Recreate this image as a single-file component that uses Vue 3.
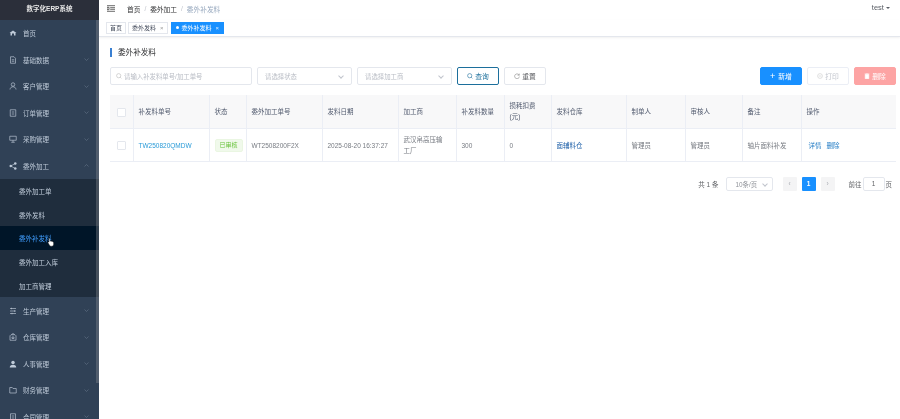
<template>
  <div class="layout">
    <aside class="sidebar">
      <div class="logo">数字化ERP系统</div>
      <div class="menu">
        <template v-for="item in menus" :key="item.name">
          <div class="menu-item">
            <svg class="menu-icon" viewBox="0 0 16 16" v-html="item.icon"></svg>
            <span class="menu-name">{{ item.name }}</span>
            <svg v-if="item.arrow" class="arrow" viewBox="0 0 10 6">
              <path :d="item.open ? 'M1 5l4-4 4 4' : 'M1 1l4 4 4-4'" fill="none" stroke="currentColor" stroke-width="1" />
            </svg>
          </div>
          <div v-if="item.open" class="submenu">
            <div v-for="sub in subs" :key="sub" class="sub-item" :class="{ active: sub === '委外补发料' }">
              {{ sub }}
              <svg v-if="sub === '委外补发料'" class="hand" viewBox="0 0 12 14">
                <path d="M3.5 1.2c.6 0 1 .4 1 1v3.6l.6-.2c.5-.1 1 .1 1.2.4.5-.2 1 0 1.300.4.5-.2 1.100 0 1.400.5.400 0 .9.300.9 1v2.600c0 1.500-1 2.800-2.500 2.800H6c-1 0-1.700-.5-2.200-1.300L1.500 8.200c-.3-.5-.1-1 .3-1.200.4-.2.9-.1 1.200.3V2.200c0-.6-.1-1 .5-1z" fill="#fff" stroke="#222" stroke-width=".7" />
              </svg>
            </div>
          </div>
        </template>
      </div>
      <div class="side-scroll"></div>
    </aside>

    <main class="main">
      <header class="navbar">
        <svg class="fold" viewBox="0 0 10 8">
          <path d="M0 .5h10M0 7.500h10M4 3h6M4 5h6M0 2.500h2.500v3H0z" fill="none" stroke="#444" stroke-width="1" />
        </svg>
        <span class="crumb">首页</span>
        <span class="sep">/</span>
        <span class="crumb">委外加工</span>
        <span class="sep">/</span>
        <span class="crumb last">委外补发料</span>
        <span class="user">test <i class="caret"></i></span>
      </header>

      <div class="tags">
        <span class="tag">首页</span>
        <span class="tag">委外发料<em>×</em></span>
        <span class="tag on"><b></b>委外补发料<em>×</em></span>
      </div>

      <section class="content">
        <h2 class="title">委外补发料</h2>

        <div class="filters">
          <div class="field search">
            <svg class="small-icon" viewBox="0 0 10 10">
              <circle cx="4.500" cy="4.500" r="3.500" fill="none" stroke="#bbb" />
              <path d="M7 7l2 2" stroke="#bbb" />
            </svg>
            请输入补发料单号/加工单号
          </div>
          <div class="field select">请选择状态<i class="chev"></i></div>
          <div class="field select">请选择加工商<i class="chev"></i></div>
          <button class="btn query">
            <svg class="small-icon" viewBox="0 0 10 10">
              <circle cx="4.500" cy="4.500" r="3.500" fill="none" stroke="#1c6f9c" />
              <path d="M7 7l2 2" stroke="#1c6f9c" />
            </svg>
            查询
          </button>
          <button class="btn">
            <svg class="small-icon" viewBox="0 0 10 10">
              <path d="M8.500 3.500A4 4 0 1 0 9 6M8.800 1v2.700H6" fill="none" stroke="#888" />
            </svg>
            重置
          </button>
          <div class="spacer"></div>
          <button class="btn primary">
            <span class="plus">+</span>
            新增
          </button>
          <button class="btn disabled">
            <svg class="small-icon" viewBox="0 0 10 10">
              <circle cx="5" cy="5" r="4" fill="none" stroke="#ccc" />
              <path d="M3 5h4" stroke="#ccc" />
            </svg>
            打印
          </button>
          <button class="btn danger">
            <svg class="small-icon" viewBox="0 0 10 10">
              <path d="M2 2.500h6V9.500H2zM1 1.500h8M4 .5h2" fill="#fff" stroke="#fff" />
            </svg>
            删除
          </button>
        </div>

        <table class="grid">
          <colgroup>
            <col v-for="(w, i) in widths" :key="i" :style="{ width: w + 'px' }" />
          </colgroup>
          <thead>
            <tr>
              <th class="check-cell"><i class="check"></i></th>
              <th v-for="h in heads" :key="h">{{ h }}</th>
            </tr>
          </thead>
          <tbody>
            <tr>
              <td class="check-cell"><i class="check"></i></td>
              <td class="link">TW250820QMDW</td>
              <td><span class="status">已审核</span></td>
              <td>WT2508200F2X</td>
              <td>2025-08-20 16:37:27</td>
              <td>武汉帛高压输<br />工厂</td>
              <td>300</td>
              <td>0</td>
              <td class="store">面辅料仓</td>
              <td>管理员</td>
              <td>管理员</td>
              <td>轴片面料补发</td>
              <td class="actions"><span>详情</span><span>删除</span></td>
            </tr>
          </tbody>
        </table>

        <div class="pager">
          <span>共 1 条</span>
          <div class="page-size">10条/页<i class="chev"></i></div>
          <span class="page-btn">‹</span>
          <span class="page-btn current">1</span>
          <span class="page-btn">›</span>
          <span class="goto">前往</span>
          <span class="page-input">1</span>
          <span>页</span>
        </div>
      </section>
    </main>
  </div>
</template>

<script setup>
const s = 'fill="none" stroke="#bfcbd9" stroke-width="1.300"'
const f = 'fill="#bfcbd9"'

const menus = [
  { name: '首页', arrow: false, icon: `<path ${f} d="M8 3L1 8h2v5h3V9h4v4h3V8h2z"/>` },
  { name: '基础数据', arrow: true, icon: `<path ${s} d="M3 1.500h7l3 3v10H3zM5.500 7.500h5M5.500 10.500h5"/>` },
  { name: '客户管理', arrow: true, icon: `<circle ${s} cx="8" cy="5" r="3.500"/><path ${s} d="M2 15c.5-4 3-5.500 6-5.500s5.500 1.500 6 5.500"/>` },
  { name: '订单管理', arrow: true, icon: `<path ${s} d="M2.500 1.500h11v13h-11zM5.500 6h5M5.500 10h5"/>` },
  { name: '采购管理', arrow: true, icon: `<path ${s} d="M1.500 2.500h13v8h-13zM4.500 14.500h7M8 10.500v4"/>` },
  { name: '委外加工', arrow: true, open: true, icon: `<circle ${f} cx="3.500" cy="8" r="2.500"/><circle ${f} cx="12.500" cy="3" r="2.500"/><circle ${f} cx="12.500" cy="13" r="2.500"/><path ${s} d="M12 3L4 8l8 5"/>` },
  { name: '生产管理', arrow: true, icon: `<path ${s} d="M2 3h12M2 8h12M2 13h12M5 1.500v3M11 6.500v3M6 11.500v3"/>` },
  { name: '仓库管理', arrow: true, icon: `<path ${s} d="M2 5.500l2-2h8l2 2v9H2zM5.500 3.500c0-3 5-3 5 0M6 8h4v3H6z"/>` },
  { name: '人事管理', arrow: true, icon: `<circle ${f} cx="8" cy="5" r="3.500"/><path ${f} d="M1.500 15c0-4 2.500-5.500 6.500-5.500s6.500 1.500 6.500 5.500z"/>` },
  { name: '财务管理', arrow: true, icon: `<path ${s} d="M1.500 3h5l1.500 2h6.500v9h-13z"/>` },
  { name: '合同管理', arrow: true, icon: `<path ${s} d="M3 1.500h10v13H3zM5.500 6h5M5.500 10h5"/>` }
]

const subs = ['委外加工单', '委外发料', '委外补发料', '委外加工入库', '加工商管理']

const widths = [23, 76, 37, 76, 76, 58, 48, 47, 75, 59, 57, 59, 95]
const heads = ['补发料单号', '状态', '委外加工单号', '发料日期', '加工商', '补发料数量', '损耗扣费(元)', '发料仓库', '制单人', '审核人', '备注', '操作']
</script>

<style>
html, body {
  margin: 0;
  background: #fff;
  overflow: hidden;
}
</style>

<style scoped>
.layout {
  display: flex;
  width: 900px;
  height: 419px;
  overflow: hidden;
  font-family: "Liberation Sans", "Noto Sans CJK SC", sans-serif;
  font-size: 6.500px;
  color: #606266;
  filter: blur(0.35px);
}

.sidebar {
  position: relative;
  flex: 0 0 99px;
  background: #304156;
  overflow: hidden;
}

.logo {
  height: 20px;
  line-height: 18px;
  background: #2b2f3a;
  color: #e6e6e6;
  font-weight: bold;
  text-align: center;
  font-size: 6.500px;
}

.menu-item {
  display: flex;
  align-items: center;
  height: 26.500px;
  color: #bfcbd9;
  padding-left: 9px;
  padding-right: 9px;
  box-sizing: border-box;
}

.menu-icon {
  width: 8px;
  height: 8px;
  margin-right: 6px;
  flex: none;
}

.menu-name {
  flex: 1;
}

.arrow {
  width: 5px;
  height: 3px;
  color: #6f7f92;
  margin-right: 1px;
}

.submenu {
  background: #1f2d3d;
}

.sub-item {
  position: relative;
  height: 23.700px;
  line-height: 25px;
  padding-left: 19px;
  color: #bfcbd9;
}

.sub-item.active {
  background: #001528;
  color: #409eff;
}

.hand {
  position: absolute;
  left: 47px;
  top: 11px;
  width: 8px;
  height: 10px;
}

.side-scroll {
  position: absolute;
  top: 20px;
  right: 0;
  width: 3px;
  height: 363px;
  background: rgba(144, 147, 153, 0.35);
}

.main {
  flex: 1;
  min-width: 0;
  display: flex;
  flex-direction: column;
}

.navbar {
  display: flex;
  align-items: center;
  height: 20px;
  flex: none;
  padding: 0 10px 3px 8px;
  box-sizing: border-box;
  font-size: 6.700px;
}

.fold {
  width: 8px;
  height: 7px;
  margin-right: 12px;
}

.crumb {
  color: #303133;
}

.crumb.last {
  color: #97a8be;
}

.sep {
  margin: 0 4px;
  color: #c0c4cc;
}

.user {
  margin-left: auto;
  margin-bottom: 2px;
  font-size: 7.500px;
  color: #5a5e66;
}

.caret {
  display: inline-block;
  border: 2px solid transparent;
  border-top-color: #5a5e66;
  border-bottom: 0;
  vertical-align: middle;
}

.tags {
  display: flex;
  align-items: center;
  gap: 2px;
  height: 17px;
  flex: none;
  padding: 0 0 1px 7px;
  box-sizing: border-box;
  border-bottom: 1px solid #e4e7ed;
  box-shadow: 0 1px 2px rgba(0, 0, 0, 0.06);
}

.tag {
  display: flex;
  align-items: center;
  height: 12px;
  padding: 0 3px;
  border: 1px solid #e4e7ed;
  box-sizing: border-box;
  font-size: 6px;
  color: #495060;
  background: #fff;
}

.tag em {
  font-style: normal;
  margin-left: 4px;
  color: #999;
}

.tag.on {
  margin-left: 1px;
  padding: 0 4px;
  background: #1890ff;
  border-color: #1890ff;
  color: #fff;
}

.tag.on em {
  color: #dcecff;
}

.tag.on b {
  width: 3px;
  height: 3px;
  border-radius: 50%;
  background: #fff;
  margin-right: 3px;
}

.content {
  padding: 11px 4px 0 11px;
}

.title {
  margin: 0 0 10px;
  padding-left: 6px;
  height: 9px;
  line-height: 9px;
  border-left: 2px solid #3a80d2;
  font-size: 7.600px;
  font-weight: normal;
  color: #303133;
}

.filters {
  display: flex;
  align-items: center;
  gap: 5px;
  height: 18px;
  margin-bottom: 9.500px;
}

.field {
  display: flex;
  align-items: center;
  height: 18px;
  padding: 0 5px;
  box-sizing: border-box;
  border: 1px solid #e4e7ed;
  border-radius: 2px;
  color: #b8bcc4;
  font-size: 6.400px;
}

.search {
  width: 142px;
}

.select {
  width: 95px;
  padding-left: 7px;
  justify-content: space-between;
}

.chev {
  width: 3px;
  height: 3px;
  border-right: 1px solid #c0c4cc;
  border-bottom: 1px solid #c0c4cc;
  transform: rotate(45deg);
  margin: 0 3px 1px;
}

.small-icon {
  width: 6px;
  height: 6px;
  margin-right: 2px;
  flex: none;
}

.btn {
  display: flex;
  align-items: center;
  justify-content: center;
  width: 42px;
  height: 18px;
  padding: 0;
  background: #fff;
  border: 1px solid #e4e7ed;
  border-radius: 2px;
  font: inherit;
  font-size: 6.800px;
  color: #606266;
}

.query {
  border-color: #1c6f9c;
  color: #1c6f9c;
}

.spacer {
  flex: 1;
}

.primary {
  background: #1890ff;
  border-color: #1890ff;
  color: #fff;
}

.plus {
  margin-right: 3px;
  font-size: 9px;
  line-height: 9px;
}

.disabled {
  border-color: #ebeef5;
  color: #c0c4cc;
}

.danger {
  background: #fda4a4;
  border-color: #fda4a4;
  color: #fff;
}

.grid {
  width: 786px;
  table-layout: fixed;
  border-collapse: collapse;
}

.grid th,
.grid td {
  padding: 0 5px;
  border-right: 1px solid #ebeef5;
  border-bottom: 1px solid #ebeef5;
  text-align: left;
  font-weight: normal;
  line-height: 11px;
  box-sizing: border-box;
}

.grid th:last-child,
.grid td:last-child {
  border-right: 0;
}

.grid th {
  height: 34px;
  background: #f8f8f9;
  color: #515a6e;
}

.grid td {
  height: 33px;
  color: #777b82;
}

.grid .check-cell {
  padding: 0;
  text-align: center;
}

.check {
  display: inline-block;
  width: 7px;
  height: 7px;
  border: 1px solid #e4e7ed;
  border-radius: 1px;
  background: #fff;
  vertical-align: middle;
}

.grid .link {
  color: #2a9bd8;
}

.status {
  display: inline-block;
  height: 13px;
  line-height: 11px;
  padding: 0 4px;
  box-sizing: border-box;
  border: 1px solid #eaf6e2;
  border-radius: 2px;
  background: #f0f9eb;
  color: #67c23a;
  font-size: 6px;
  white-space: nowrap;
}

.grid .store {
  color: #1d5fa8;
}

.grid .actions {
  color: #1f7ac4;
}

.actions span {
  margin-left: 2px;
  margin-right: 3px;
}

.pager {
  display: flex;
  align-items: center;
  height: 14px;
  margin-top: 15px;
  padding-right: 4px;
  justify-content: flex-end;
  color: #606266;
}

.page-size {
  display: flex;
  align-items: center;
  justify-content: space-between;
  width: 47px;
  height: 14px;
  margin: 0 10px 0 7px;
  padding: 0 2px 0 9px;
  box-sizing: border-box;
  border: 1px solid #e4e7ed;
  border-radius: 2px;
  color: #909399;
  font-size: 6.400px;
}

.page-btn {
  width: 14px;
  height: 14px;
  line-height: 14px;
  margin-right: 5px;
  text-align: center;
  border-radius: 1px;
  background: #f4f4f5;
  color: #a8abb2;
}

.page-btn.current {
  background: #1890ff;
  color: #fff;
  font-weight: bold;
}

.goto {
  margin-left: 9px;
}

.page-input {
  width: 22px;
  height: 14px;
  line-height: 12px;
  margin: 0 1px;
  box-sizing: border-box;
  text-align: center;
  border: 1px solid #e4e7ed;
  border-radius: 2px;
}
</style>
